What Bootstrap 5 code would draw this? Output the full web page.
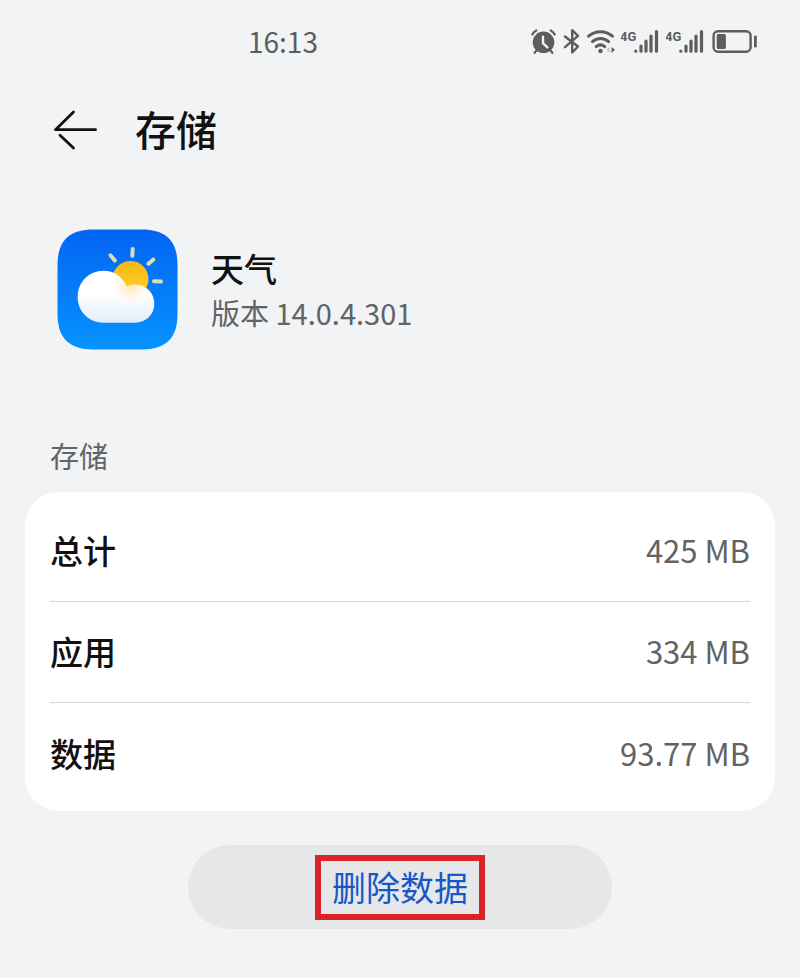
<!DOCTYPE html>
<html lang="zh-CN">
<head>
<meta charset="utf-8">
<meta name="viewport" content="width=device-width, initial-scale=1">
<title>存储</title>
<link href="https://cdn.jsdelivr.net/npm/bootstrap@5.3.0/dist/css/bootstrap.min.css" rel="stylesheet">
<style>
  body { background: #f1f3f5; color: #111; font-family: "Noto Sans CJK SC", sans-serif; }
  .muted { color: #626365; }
  .status-bar { height: 84px; padding: 0 42px 0 31%; color: #5c5d5f; }
  .clock { font-size: 28px; line-height: 32px; padding-bottom: 2px; }
  .status-icons { gap: 5px; }
  .status-icons svg, .back svg, .app-icon { display: block; }
  .title-bar { height: 92px; padding: 0 52px; gap: 36px; }
  .back { color: #111; }
  .title-bar h1 { font-size: 41px; line-height: 60px; font-weight: 500; padding-bottom: 4px; }
  .app-info { padding: 53px 57px 0; gap: 33px; }
  .app-name { font-size: 33px; line-height: 44px; font-weight: 500; }
  .app-version { font-size: 29px; line-height: 44px; }
  .section-label { font-size: 29px; line-height: 44px; padding: 83px 50px 15px; }
  .storage-card { margin: 0 25px; padding: 9px 25px 7px; border-radius: 34px; }
  .storage-row { height: 101px; border-bottom: 1px solid #d3d4d5; padding-bottom: 2px; }
  .storage-row:last-child { border-bottom: 0; }
  .storage-row dt { font-size: 33px; line-height: 44px; font-weight: 500; }
  .storage-row dd { font-size: 31px; line-height: 44px; }
  .actions { padding-top: 34px; }
  .clear-btn, .clear-btn:hover { width: 53%; height: 84px; background: #e5e7e9; color: #1857c8; }
  .highlight { border: 6px solid #d9242c; padding: 4px 11px 5px; font-size: 34px; line-height: 44px; }
</style>
<script src="https://cdn.jsdelivr.net/npm/bootstrap@5.3.0/dist/js/bootstrap.bundle.min.js"></script>
</head>
<body>
<div class="status-bar d-flex align-items-center justify-content-between">
  <time class="clock">16:13</time>
  <div class="status-icons d-flex align-items-center" aria-hidden="true">
    <svg width="27" height="32" viewBox="530 26 27 32" fill="none" stroke="currentColor" stroke-width="2.2" stroke-linecap="round">
      <circle cx="543.5" cy="42.3" r="10.8" fill="currentColor" stroke="none"/>
      <path d="M532.3 34.5q1.2-2.6 4-4M554.7 34.5q-1.2-2.6-4-4M536 51l-1.4 1.9M551 51l1.4 1.9"/>
      <path d="M543 36.8v6.2l4.3 4.3" stroke="#f1f3f5" stroke-width="2.4"/>
    </svg>
    <svg width="19" height="32" viewBox="562 26 19 32" fill="none" stroke="currentColor" stroke-width="2.4" stroke-linecap="round" stroke-linejoin="round">
      <path d="M565 36.5l13 10-5.8 6V30.200l5.800 5.600-13 11.400"/>
    </svg>
    <svg width="30" height="32" viewBox="586 26 30 32" fill="none" stroke="currentColor" stroke-width="3" stroke-linecap="round">
      <path d="M588.6 36.2c7-6 16.8-6 23.8 0M592.4 41.6c4.800-4.200 11.400-4.200 16.200 0M596.2 46.600c2.700-2.200 5.900-2.200 8.600 0"/>
      <circle cx="600.5" cy="51" r="2.2" fill="currentColor" stroke="none"/>
      <path d="M611.5 47v6l3.5-3.2z" fill="currentColor" stroke="none"/>
      <path d="M609.5 47v6l-3-3.2z" fill="#c3c4c6" stroke="none"/>
    </svg>
    <svg width="40" height="32" viewBox="621 26 40 32" fill="none" stroke="currentColor" stroke-width="3.2" stroke-linecap="round">
      <text x="620" y="41" font-family="Roboto, sans-serif" font-size="13" font-weight="700" fill="currentColor" stroke="none">4G</text>
      <path d="M635.8 51v.2M641 46v5.2M646 41v10.2M651 36v15.2M656.5 31.5v19.7"/>
    </svg>
    <svg width="40" height="32" viewBox="621 26 40 32" fill="none" stroke="currentColor" stroke-width="3.2" stroke-linecap="round">
      <text x="620" y="41" font-family="Roboto, sans-serif" font-size="13" font-weight="700" fill="currentColor" stroke="none">4G</text>
      <path d="M635.8 51v.2M641 46v5.2M646 41v10.2M651 36v15.2M656.5 31.5v19.7"/>
    </svg>
    <svg width="47" height="32" viewBox="711 26 47 32" fill="currentColor">
      <rect x="713.6" y="31.2" width="37" height="20.6" rx="4.5" fill="none" stroke="currentColor" stroke-width="2.4"/>
      <rect x="716.7" y="34" width="9.2" height="15" rx="1.5"/>
      <rect x="754" y="35.5" width="2.8" height="12" rx="1.3"/>
    </svg>
  </div>
</div>

<header class="title-bar d-flex align-items-center">
  <button type="button" class="back btn border-0 p-0" aria-label="返回">
    <svg width="47" height="44" viewBox="52 108 47 44" fill="none" stroke="currentColor" stroke-width="2.8" stroke-linecap="round" stroke-linejoin="round">
      <path d="M73.5 112L55.5 129.7H95.500M60 135.200L73.500 148"/>
    </svg>
  </button>
  <h1 class="m-0">存储</h1>
</header>

<main>
  <section class="app-info d-flex align-items-center">
    <svg class="app-icon flex-shrink-0" width="121" height="121" viewBox="0 0 121 121" role="img" aria-label="天气">
      <defs>
        <linearGradient id="sky" x1="0" y1="0" x2="0" y2="1"><stop offset="0" stop-color="#0464f4"/><stop offset="1" stop-color="#0593ff"/></linearGradient>
        <linearGradient id="sun" x1="0" y1="0" x2="0" y2="1"><stop offset="0" stop-color="#f6b914"/><stop offset="1" stop-color="#ffd02c"/></linearGradient>
        <linearGradient id="cloud" x1="0" y1="0" x2="0" y2="1"><stop offset=".45" stop-color="#fff"/><stop offset="1" stop-color="#e2edfc"/></linearGradient>
        <radialGradient id="glow" gradientUnits="userSpaceOnUse" cx="74" cy="57" r="18"><stop offset="0" stop-color="#ffdf9f" stop-opacity=".85"/><stop offset="1" stop-color="#fff0d6" stop-opacity="0"/></radialGradient>
        <path id="cloud-shape" d="M47 93.7C31 93.7 20.7 82 20.7 68C20.7 53 32 41.7 46.5 41.7C57 41.7 65.5 47.5 69.8 57.4C72.5 56 75.2 55.500 78 55.5C89 55.5 97.3 64 97.3 74.5C97.3 85.5 89 93.7 78 93.7Z"/>
      </defs>
      <path fill="url(#sky)" d="M36 .5H85C109 .5 120.5 12 120.5 36V85C120.5 109 109 120.5 85 120.5H36C12 120.5 .5 109 .5 85V36C.5 12 12 .5 36 .5Z"/>
      <path d="M53.5 26.3l4.3 5.2M75.7 20l-.4 6.8M96.3 30.5l-4.8 4.2M97 52.300l7 .2" fill="none" stroke="#d8dfb0" stroke-width="4" stroke-linecap="round"/>
      <circle cx="73.5" cy="50" r="18" fill="url(#sun)"/>
      <use href="#cloud-shape" fill="url(#cloud)"/>
      <use href="#cloud-shape" fill="url(#glow)"/>
    </svg>
    <div>
      <h2 class="app-name m-0">天气</h2>
      <p class="app-version muted m-0">版本 14.0.4.301</p>
    </div>
  </section>

  <h3 class="section-label muted fw-normal m-0">存储</h3>
  <dl class="storage-card bg-white mb-0">
    <div class="storage-row d-flex align-items-center justify-content-between"><dt>总计</dt><dd class="muted m-0">425 MB</dd></div>
    <div class="storage-row d-flex align-items-center justify-content-between"><dt>应用</dt><dd class="muted m-0">334 MB</dd></div>
    <div class="storage-row d-flex align-items-center justify-content-between"><dt>数据</dt><dd class="muted m-0">93.77 MB</dd></div>
  </dl>

  <div class="actions d-flex justify-content-center">
    <button type="button" class="clear-btn btn border-0 rounded-pill p-0 d-flex align-items-center justify-content-center"><span class="highlight">删除数据</span></button>
  </div>
</main>
</body>
</html>
